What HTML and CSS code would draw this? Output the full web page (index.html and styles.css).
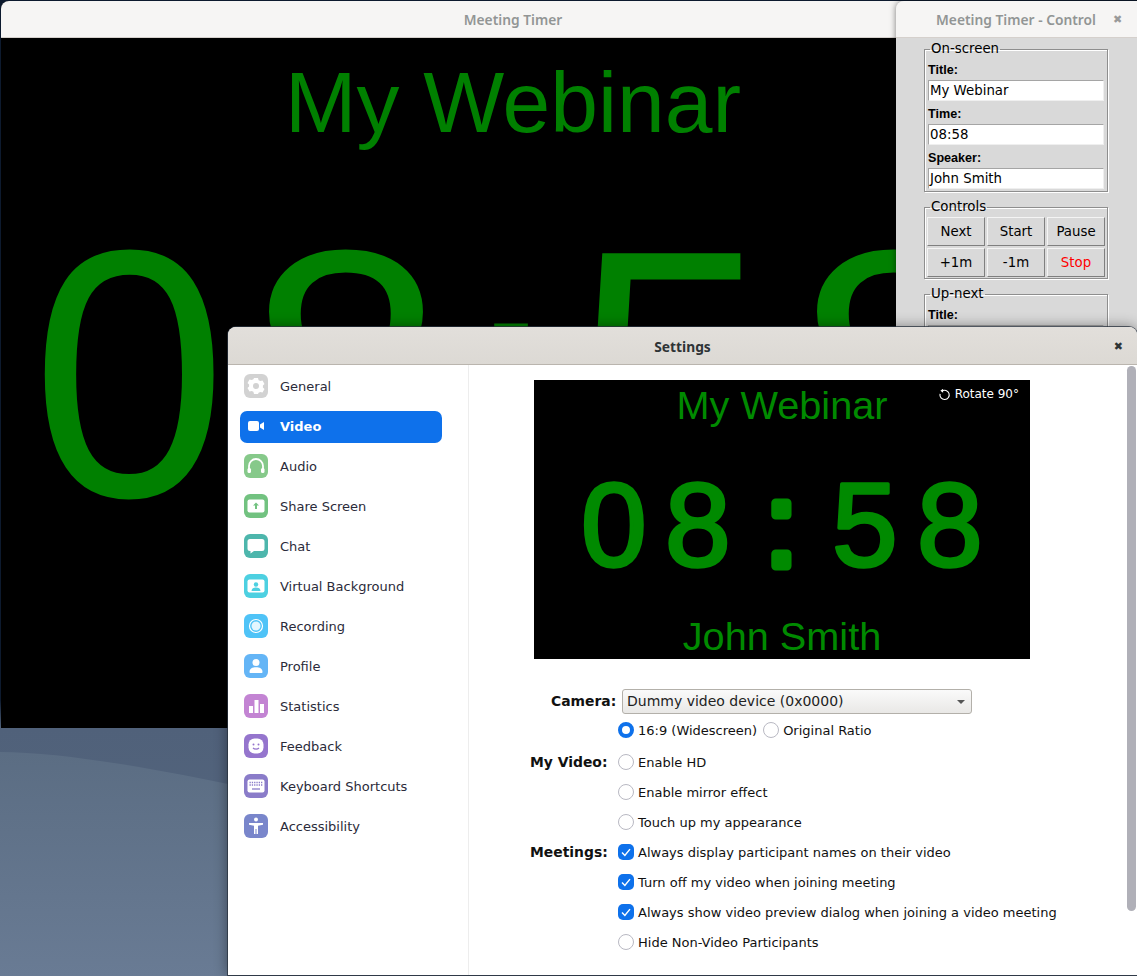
FILE: index.html
```html
<!DOCTYPE html>
<html lang="en">
<head>
  <meta charset="UTF-8">
  <meta name="viewport" content="width=device-width, initial-scale=1.0">
  <title>Meeting Timer</title>
  <link rel="stylesheet" href="styles.css">
</head>
<body>

<div class="desktop">
  <svg class="wallpaper" viewBox="0 0 1137 976" preserveAspectRatio="none">
    <defs>
      <linearGradient id="wave" x1="0" y1="0" x2="0" y2="1">
        <stop offset="0" stop-color="#5b6d83"/>
        <stop offset="1" stop-color="#697b94"/>
      </linearGradient>
    </defs>
    <path d="M0 752 C60 752 150 768 228 784 L228 976 L0 976 Z" fill="url(#wave)"/>
  </svg>

  <!-- Timer window -->
  <div class="window timer-window">
    <div class="titlebar light">Meeting Timer</div>
    <div class="timer-stage">
      <div class="timer-title">My Webinar</div>
      <svg class="timer-clock" viewBox="0 0 1024 400">
        <text y="345"><tspan x="30 247">08</tspan><tspan x="461" dy="14">:</tspan><tspan x="572 795" dy="-14">58</tspan></text>
      </svg>
    </div>
  </div>

  <!-- Control window -->
  <div class="window control-window">
    <div class="titlebar light control-bar">
      <span>Meeting Timer - Control</span>
      <span class="close">&#10006;</span>
    </div>
    <div class="control-body">
      <fieldset class="tk-group">
        <legend>On-screen</legend>
        <label>Title:</label>
        <div class="tk-entry">My Webinar</div>
        <label>Time:</label>
        <div class="tk-entry">08:58</div>
        <label>Speaker:</label>
        <div class="tk-entry">John Smith</div>
      </fieldset>
      <fieldset class="tk-group">
        <legend>Controls</legend>
        <div class="tk-buttons">
          <div class="tk-button">Next</div>
          <div class="tk-button">Start</div>
          <div class="tk-button">Pause</div>
          <div class="tk-button">+1m</div>
          <div class="tk-button">-1m</div>
          <div class="tk-button stop">Stop</div>
        </div>
      </fieldset>
      <fieldset class="tk-group">
        <legend>Up-next</legend>
        <label>Title:</label>
        <div class="tk-entry"></div>
      </fieldset>
    </div>
  </div>

  <!-- Settings window -->
  <div class="window settings-window">
    <div class="titlebar settings-bar">
      <span>Settings</span>
      <span class="close">&#10006;</span>
    </div>
    <div class="settings-body">
      <nav class="sidebar">
        <div class="nav-item">
          <span class="nav-icon" style="background:#d2d2d2">
            <svg viewBox="0 0 24 24"><path fill="#fff" d="M10 4h4l.6 2.2 1.7.9 2.2-.6 2 3.500-1.600 1.600v1.800l1.600 1.600-2 3.500-2.200-.6-1.700.9L14 20h-4l-.6-2.200-1.700-.9-2.200.6-2-3.500 1.600-1.600v-1.800L3.500 9l2-3.500 2.200.6 1.700-.9z"/><circle cx="12" cy="12" r="3" fill="#d2d2d2"/></svg>
          </span>General
        </div>
        <div class="nav-item active">
          <span class="nav-icon">
            <svg viewBox="0 0 24 24"><rect x="4" y="7" width="11" height="10" rx="2" fill="#fff"/><path fill="#fff" d="M16 10.500l4-2.500v8l-4-2.500z"/></svg>
          </span>Video
        </div>
        <div class="nav-item">
          <span class="nav-icon" style="background:#86c98a">
            <svg viewBox="0 0 24 24"><path fill="none" stroke="#fff" stroke-width="1.800" d="M5 16v-4a7 7 0 0 1 14 0v4"/><rect x="3.500" y="14" width="3.500" height="5" rx="1.500" fill="#fff"/><rect x="17" y="14" width="3.500" height="5" rx="1.500" fill="#fff"/></svg>
          </span>Audio
        </div>
        <div class="nav-item">
          <span class="nav-icon" style="background:#72c280">
            <svg viewBox="0 0 24 24"><rect x="3.500" y="5.500" width="17" height="13" rx="2" fill="#fff"/><path fill="#72c280" d="M12 8.500l3 3h-2v3.500h-2v-3.500H9z"/></svg>
          </span>Share Screen
        </div>
        <div class="nav-item">
          <span class="nav-icon" style="background:#4db6ac">
            <svg viewBox="0 0 24 24"><path fill="#fff" d="M6 5h12a2.500 2.500 0 0 1 2.500 2.500v7A2.500 2.500 0 0 1 18 17h-8l-3.500 2.500V17H6a2.500 2.500 0 0 1-2.500-2.500v-7A2.500 2.500 0 0 1 6 5z"/></svg>
          </span>Chat
        </div>
        <div class="nav-item">
          <span class="nav-icon" style="background:#4dd0e1">
            <svg viewBox="0 0 24 24"><rect x="3.500" y="5.500" width="17" height="13" rx="2" fill="#fff"/><circle cx="12" cy="10.500" r="2.200" fill="#4dd0e1"/><path fill="#4dd0e1" d="M7.500 17c0-2.500 2-3.500 4.500-3.500s4.500 1 4.500 3.500z"/></svg>
          </span>Virtual Background
        </div>
        <div class="nav-item">
          <span class="nav-icon" style="background:#4fc3f7">
            <svg viewBox="0 0 24 24"><circle cx="12" cy="12" r="6.500" fill="none" stroke="#fff" stroke-width="1.200"/><circle cx="12" cy="12" r="4.500" fill="#e4f6fe"/></svg>
          </span>Recording
        </div>
        <div class="nav-item">
          <span class="nav-icon" style="background:#64b5f6">
            <svg viewBox="0 0 24 24"><circle cx="12" cy="8.500" r="3.500" fill="#fff"/><path fill="#fff" d="M5.500 18c0-3.500 3-4.800 6.500-4.800s6.500 1.300 6.500 4.800c0 .6-.5 1-1 1h-11c-.5 0-1-.4-1-1z"/></svg>
          </span>Profile
        </div>
        <div class="nav-item">
          <span class="nav-icon" style="background:#c384d3">
            <svg viewBox="0 0 24 24"><rect x="5" y="12" width="4" height="7" fill="#fff"/><rect x="10.500" y="6" width="4" height="13" fill="#fff"/><rect x="16" y="10" width="4" height="9" fill="#fff"/></svg>
          </span>Statistics
        </div>
        <div class="nav-item">
          <span class="nav-icon" style="background:#9575cd">
            <svg viewBox="0 0 24 24"><rect x="4.500" y="4.500" width="15" height="15" rx="6" fill="#fff"/><circle cx="9.500" cy="10.500" r="1" fill="#9575cd"/><circle cx="14.500" cy="10.500" r="1" fill="#9575cd"/><path fill="none" stroke="#9575cd" stroke-width="1.200" d="M9 14c1.500 1.500 4.500 1.500 6 0"/></svg>
          </span>Feedback
        </div>
        <div class="nav-item">
          <span class="nav-icon" style="background:#8a7cc9">
            <svg viewBox="0 0 24 24"><rect x="3.500" y="5.500" width="17" height="13" rx="2" fill="#fff"/><path stroke="#8a7cc9" stroke-width="1.300" stroke-dasharray="1.300 1" d="M5.500 8.500h13M5.500 11h13"/><path stroke="#8a7cc9" stroke-width="1.300" d="M8 15h8"/></svg>
          </span>Keyboard Shortcuts
        </div>
        <div class="nav-item">
          <span class="nav-icon" style="background:#7986cb">
            <svg viewBox="0 0 24 24"><circle cx="12" cy="5.500" r="2" fill="#fff"/><path fill="#fff" d="M5 9h14v1.700l-5 1V20h-1.500v-5h-1v5H10v-8.300l-5-1z"/></svg>
          </span>Accessibility
        </div>
      </nav>

      <main class="content">
        <div class="preview">
          <div class="preview-title">My Webinar</div>
          <svg class="preview-clock" viewBox="0 0 496 183">
            <text y="137"><tspan x="47 131">08</tspan><tspan class="colon" x="231">:</tspan><tspan x="298 383">58</tspan></text>
          </svg>
          <div class="preview-speaker">John Smith</div>
          <div class="rotate">
            <svg viewBox="0 0 14 14"><path fill="none" stroke="#fff" stroke-width="1.200" d="M4.200 3.300a5 5 0 1 1-2 3"/><path fill="#fff" d="M5.500 .8v4.200L2.500 3z"/></svg>
            Rotate 90°
          </div>
        </div>

        <div class="form">
          <div class="camera-row">
            <span class="form-label">Camera:</span>
            <div class="select">Dummy video device (0x0000)<span class="caret"></span></div>
          </div>
          <div class="ratio-row">
            <span class="radio on"></span><span>16:9 (Widescreen)</span>
            <span class="radio"></span><span>Original Ratio</span>
          </div>
          <div class="option-group">
            <span class="group-label">My Video:</span>
            <div class="options">
              <div class="option"><span class="radio"></span>Enable HD</div>
              <div class="option"><span class="radio"></span>Enable mirror effect</div>
              <div class="option"><span class="radio"></span>Touch up my appearance</div>
            </div>
          </div>
          <div class="option-group">
            <span class="group-label">Meetings:</span>
            <div class="options">
              <div class="option"><span class="radio checked"><svg viewBox="0 0 14 14"><path fill="none" stroke="#fff" stroke-width="1.300" d="M3.500 7.500l2.500 2.500 4.500-5.500"/></svg></span>Always display participant names on their video</div>
              <div class="option"><span class="radio checked"><svg viewBox="0 0 14 14"><path fill="none" stroke="#fff" stroke-width="1.300" d="M3.500 7.500l2.500 2.500 4.500-5.500"/></svg></span>Turn off my video when joining meeting</div>
              <div class="option"><span class="radio checked"><svg viewBox="0 0 14 14"><path fill="none" stroke="#fff" stroke-width="1.300" d="M3.500 7.500l2.500 2.500 4.500-5.500"/></svg></span>Always show video preview dialog when joining a video meeting</div>
              <div class="option"><span class="radio"></span>Hide Non-Video Participants</div>
            </div>
          </div>
        </div>
        <div class="scrollbar"></div>
      </main>
    </div>
  </div>
</div>

</body>
</html>
```
FILE: styles.css
```css
html, body {
  margin: 0;
  height: 100%;
  overflow: hidden;
}

body {
  font-family: 'DejaVu Sans', sans-serif;
  font-size: 13px;
}

/* Desktop and its windows */
.desktop {
  position: relative;
  width: 1137px;
  height: 976px;
  overflow: hidden;
  background: linear-gradient(#0d1a2e 0, #0d1a2e 700px, #50617a 728px, #56687f 976px);
}

.wallpaper {
  position: absolute;
  inset: 0;
  width: 100%;
  height: 100%;
}

.window {
  position: absolute;
  display: flex;
  flex-direction: column;
  overflow: hidden;
  border-radius: 8px 8px 0 0;
}

.titlebar {
  height: 37px;
  flex: none;
  display: flex;
  align-items: center;
  justify-content: center;
  font-family: 'Noto Sans', sans-serif;
  font-size: 13.8px;
  font-weight: 600;
  box-sizing: border-box;
}

.titlebar.light {
  background: #f6f5f4;
  color: #929595;
  border-bottom: 1px solid #d5d0cc;
}

.close {
  position: absolute;
  font-family: 'DejaVu Sans', sans-serif;
  font-size: 11px;
}

/* Timer window */
.timer-window {
  left: 1px;
  top: 1px;
  width: 1024px;
  height: 727px;
  background: #000;
}

.timer-stage {
  flex: 1;
  overflow: hidden;
  background: #000;
  color: #008000;
  font-family: 'Liberation Sans', sans-serif;
  text-align: center;
}

.timer-title {
  font-size: 85.8px;
  line-height: 98px;
  margin-top: 15px;
}

.timer-clock {
  display: block;
  width: 1024px;
  height: 400px;
  font-size: 353px;
  fill: #008000;
}

/* Control window */
.control-window {
  left: 896px;
  top: 1px;
  width: 260px;
  height: 340px;
  background: #d9d9d9;
  box-shadow: 0 0 6px rgba(0, 0, 0, 0.5);
}

.control-bar {
  justify-content: flex-start;
  padding-left: 40px;
}

.control-bar .close {
  left: 217px;
  color: #9a9a9a;
}

.control-body {
  padding: 3px 0 0 28px;
  width: 184px;
  color: #000;
}

.tk-group {
  box-sizing: border-box;
  width: 184px;
  margin: 0 0 7px;
  padding: 0 3px 2px 3px;
  border: 1px solid #8e8e8e;
  box-shadow: 1px 1px 0 #fff, inset 1px 1px 0 #fff;
  min-width: 0;
}

.tk-group legend {
  padding: 0 1px;
  margin-left: 2px;
  font-size: 13.33px;
  line-height: 16px;
}

.tk-group label {
  display: block;
  font-family: 'Liberation Sans', sans-serif;
  font-weight: bold;
  font-size: 12.6px;
  line-height: 14px;
  margin: 6px 0 3px 0;
}

.tk-entry {
  height: 21px;
  line-height: 19px;
  box-sizing: border-box;
  padding-left: 1px;
  background: #fff;
  border: 1px solid #a5a5a5;
  border-right-color: #efefef;
  border-bottom-color: #efefef;
  font-size: 13.33px;
}

.tk-buttons {
  display: grid;
  grid-template-columns: repeat(3, 58px);
  gap: 2px;
  margin: 2px 0 -1px -1px;
}

.tk-button {
  height: 29px;
  line-height: 27px;
  box-sizing: border-box;
  text-align: center;
  background: #d9d9d9;
  border: 1px solid;
  border-color: #f4f4f4 #7f7f7f #7f7f7f #f4f4f4;
  font-size: 13.33px;
}

.tk-button.stop {
  color: #ff0000;
}

/* Settings window */
.settings-window {
  left: 228px;
  top: 327px;
  width: 909px;
  height: 648px;
  background: #fff;
  box-shadow: 0 0 0 1px rgba(40, 50, 62, 0.75), 0 0 14px rgba(0, 0, 0, 0.45);
}

.settings-bar {
  height: 38px;
  background: linear-gradient(#e2dfdb, #dcd9d4);
  color: #2e3436;
  border-bottom: 1px solid #bab5ae;
  font-weight: 700;
  padding-top: 1px;
}

.settings-bar .close {
  right: 14px;
  color: #2e3436;
}

.settings-body {
  flex: 1;
  display: flex;
  min-height: 0;
}

.sidebar {
  display: flex;
  flex-direction: column;
  width: 241px;
  box-sizing: border-box;
  flex: none;
  padding: 1px 26px 0 12px;
  border-right: 1px solid #ededed;
  color: #2b2b3a;
}

.nav-item {
  height: 32px;
  margin: 0 0 8px;
  display: flex;
  align-items: center;
  padding-left: 4px;
  gap: 12px;
  border-radius: 7px;
}

.nav-item:first-child {
  margin-top: 4px;
}

.nav-item.active {
  box-sizing: border-box;
  margin: 1px 0 7px;
  padding-bottom: 2px;
  background: #0e71eb;
  color: #fff;
  font-weight: bold;
}

.nav-icon {
  width: 24px;
  height: 24px;
  border-radius: 6px;
  flex: none;
}

.nav-icon svg {
  display: block;
  width: 24px;
  height: 24px;
}

.content {
  flex: 1;
  position: relative;
  min-width: 0;
  padding: 15px 0 0 65px;
}

.scrollbar {
  position: absolute;
  right: 1px;
  top: 1px;
  width: 9px;
  height: 545px;
  border-radius: 5px;
  background: #b0b0b8;
}

/* Preview */
.preview {
  position: relative;
  width: 496px;
  height: 279px;
  background: #000;
  color: #008a00;
  text-align: center;
  font-family: 'Liberation Sans', sans-serif;
}

.preview-title {
  font-size: 39.7px;
  line-height: 48px;
  padding-top: 1px;
}

.preview-clock {
  display: block;
  width: 496px;
  height: 183px;
  font-size: 118px;
  fill: #008a00;
  stroke: #008a00;
  stroke-width: 3.5px;
  stroke-linejoin: round;
}

.preview-clock .colon {
  stroke-width: 9px;
}

.preview-speaker {
  font-size: 39.7px;
  line-height: 48px;
}

.rotate {
  position: absolute;
  top: 7px;
  right: 11px;
  display: flex;
  align-items: center;
  gap: 4px;
  color: #fff;
  font-family: 'DejaVu Sans', sans-serif;
  font-size: 12px;
  line-height: 14px;
}

.rotate svg {
  width: 13px;
  height: 13px;
}

/* Form */
.form {
  margin-top: 30px;
  color: #111;
}

.camera-row {
  display: flex;
  align-items: center;
  height: 25px;
  padding-left: 17px;
}

.form-label,
.group-label {
  font-weight: bold;
  font-size: 13.9px;
}

.form-label {
  width: 66px;
  flex: none;
  margin-top: -2px;
}

.select {
  position: relative;
  width: 350px;
  height: 25px;
  margin-left: 5px;
  box-sizing: border-box;
  border: 1px solid #b3b0aa;
  border-radius: 3px;
  background: linear-gradient(#fafafa, #e9e8e6);
  padding-left: 4px;
  line-height: 23px;
  font-size: 14px;
  color: #222;
}

.caret {
  position: absolute;
  right: 6px;
  top: 10px;
  border: 4px solid transparent;
  border-top: 4px solid #555;
  border-bottom: 0;
}

.ratio-row {
  display: flex;
  align-items: center;
  height: 30px;
  margin: 1px 0 2px;
  padding-left: 84px;
}

.ratio-row .radio {
  margin-right: 4px;
}

.ratio-row span:nth-child(2) {
  margin-right: 6px;
}

.option-group {
  display: flex;
}

.group-label {
  width: 88px;
  box-sizing: border-box;
  line-height: 30px;
  margin-left: -4px;
}

.option {
  height: 30px;
  display: flex;
  align-items: center;
  gap: 4px;
}

.radio {
  width: 16px;
  height: 16px;
  flex: none;
  box-sizing: border-box;
  border: 1px solid #b9b9c3;
  border-radius: 50%;
  background: #fff;
}

.radio.on {
  border: 4px solid #0e71eb;
}

.radio.checked {
  border: 0;
  border-radius: 5px;
  background: #0e71eb;
}

.radio svg {
  display: block;
  width: 16px;
  height: 16px;
}
```
